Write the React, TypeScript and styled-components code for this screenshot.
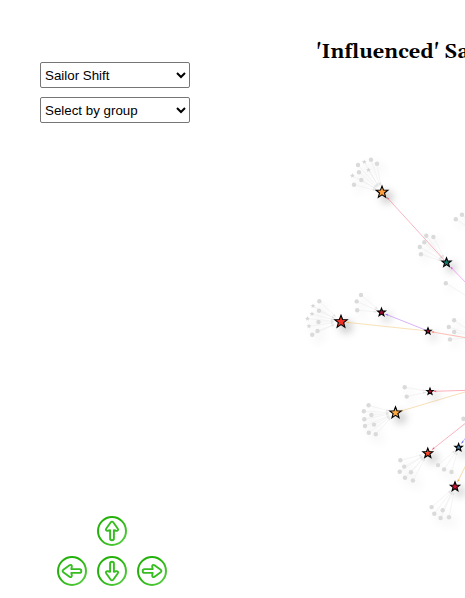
import React from "react";
import styled, { createGlobalStyle } from "styled-components";

const GlobalStyle = createGlobalStyle`
  * { box-sizing: border-box; }
  body { margin: 0; background: #fff; overflow: hidden; }
`;

const Page = styled.main`
  display: grid;
  grid-template-columns: 300px 1fr;
  width: 100%;
  height: 598px;
  overflow: hidden;
`;

const Sidebar = styled.aside`
  display: flex;
  flex-direction: column;
  justify-content: space-between;
  padding: 62px 0 12px 40px;
`;

const Filters = styled.div`
  display: flex;
  flex-direction: column;
  gap: 9px;
`;

const Select = styled.select`
  width: 150px;
  height: 26px;
  padding: 0;
  border: 1px solid #767676;
  border-radius: 2px;
  background: #fff;
  color: #000;
  font: 13.333px "Liberation Sans", Arial, sans-serif;
`;

const Pad = styled.nav`
  display: grid;
  grid-template-columns: repeat(3, 30px);
  gap: 10px;
  margin-left: 17px;
`;

const PadButton = styled.button<{ $column: number; $row: number }>`
  grid-column: ${(p) => p.$column};
  grid-row: ${(p) => p.$row};
  width: 30px;
  height: 30px;
  padding: 0;
  border: 0;
  background: none;
  svg { display: block; }
`;

const GraphPanel = styled.section`
  display: flex;
  flex-direction: column;
  min-width: 0;
  overflow: hidden;
`;

const Title = styled.h1`
  flex: none;
  height: 70px;
  margin: 0;
  padding: 39px 0 0 16px;
  overflow: hidden;
  white-space: nowrap;
  color: #000;
  font: bold 20px/26px Gelasio, Georgia, serif;
  letter-spacing: 0.07px;
`;

const Canvas = styled.svg`
  display: block;
  width: 100%;
  height: 528px;
`;

type Point = [number, number];
type Leaf = [number, number, 1?];

interface Cluster {
  at: Point;
  size: number;
  fill?: string;
  leaves: Leaf[];
}

const clusters: Cluster[] = [
  { at: [382, 192.2], size: 6.2, fill: "#ff9f40", leaves: [[358, 165], [364.3, 162, 1], [371, 159.7], [377, 163.8], [359, 172.2], [368.5, 170, 1], [352.4, 175.7, 1], [361.3, 180], [354, 184.7]] },
  { at: [446.5, 262.6], size: 4.9, fill: "#12786b", leaves: [[426.3, 235.7], [433.4, 237], [424.3, 242.2], [419.8, 247], [421, 254.2]] },
  { at: [341, 321.8], size: 6.6, fill: "#ef3125", leaves: [[319.3, 301.2], [313, 306, 1], [319, 310.8], [312, 314, 1], [307.5, 318.7, 1], [318.5, 322], [309, 326.2, 1], [317.5, 331], [312.2, 334.7]] },
  { at: [381.5, 312.3], size: 4.2, fill: "#a80932", leaves: [[361, 295], [356.7, 301.4], [357.2, 310.2]] },
  { at: [428, 331.2], size: 3.4, fill: "#b40a35", leaves: [] },
  { at: [430, 391.5], size: 3.4, fill: "#c60d36", leaves: [[404.7, 387.3], [406.7, 396.6]] },
  { at: [395.5, 412.8], size: 6, fill: "#ffa942", leaves: [[368.6, 405.3], [363.8, 411.3], [371.4, 415], [364.3, 419.2], [365, 426], [374, 424.6], [368.8, 432.7], [375.8, 434.2]] },
  { at: [427.8, 453.3], size: 5.2, fill: "#f44a29", leaves: [[400.4, 460.3], [404.2, 466.6], [399.7, 471.7], [411, 472.2], [405, 477.8], [412.9, 480.5]] },
  { at: [458.6, 447.5], size: 4, fill: "#4e87b2", leaves: [[438, 465.1], [444.1, 469.4], [451.5, 472]] },
  { at: [455, 486.7], size: 4.9, fill: "#cf1434", leaves: [[431.6, 507.1], [434.3, 513.8], [442.7, 510.3], [440.6, 518], [449, 517.2]] },
  { at: [480, 304], size: 4, leaves: [[445.8, 283.3]] },
  { at: [478, 337], size: 4, leaves: [[454.1, 320.3], [448.8, 327], [454.2, 332], [450, 339.4]] },
  { at: [486, 238], size: 4, leaves: [[455.8, 219.3], [462, 214.8]] },
  { at: [490, 410], size: 4, leaves: [[463.4, 418.7]] },
];

const links: { from: Point; to: Point; color: string }[] = [
  { from: [446, 262], to: [386.8, 197.2], color: "#f05f76" },
  { from: [468, 285], to: [450.5, 266.8], color: "#ed48ed" },
  { from: [428, 331], to: [346.3, 322.3], color: "#edbc60" },
  { from: [428, 331], to: [385.3, 314], color: "#a655f5" },
  { from: [475, 339.3], to: [431.2, 331.8], color: "#ff705b" },
  { from: [475, 390.1], to: [433.5, 391.3], color: "#f65269" },
  { from: [475, 389], to: [400.2, 411.3], color: "#edb75d" },
  { from: [475, 415.7], to: [432, 449.7], color: "#f35770" },
  { from: [470, 432], to: [461.4, 443.5], color: "#6764ee" },
  { from: [470.5, 456], to: [457.5, 482], color: "#edae43" },
];

const starPoints = (x: number, y: number, radius: number) =>
  Array.from({ length: 10 }, (_, i) => {
    const angle = -Math.PI / 2 + (i * Math.PI) / 5;
    const r = i % 2 ? radius * 0.42 : radius;
    return `${(x + Math.cos(angle) * r).toFixed(2)},${(y + Math.sin(angle) * r).toFixed(2)}`;
  }).join(" ");

function Link({ from, to, color }: { from: Point; to: Point; color: string }) {
  const angle = (Math.atan2(to[1] - from[1], to[0] - from[0]) * 180) / Math.PI;
  return (
    <g>
      <line x1={from[0]} y1={from[1]} x2={to[0]} y2={to[1]} stroke={color} strokeWidth="0.45" />
      <path d="M0 0L-3-1L-2.3 0L-3 1Z" fill={color} transform={`translate(${to[0]} ${to[1]}) rotate(${angle})`} />
    </g>
  );
}

function LeafEdge({ leaf, at, size }: { leaf: Leaf; at: Point; size: number }) {
  const dx = leaf[0] - at[0];
  const dy = leaf[1] - at[1];
  const length = Math.hypot(dx, dy);
  const tipX = at[0] + (dx / length) * (size + 0.5);
  const tipY = at[1] + (dy / length) * (size + 0.5);
  const angle = (Math.atan2(-dy, -dx) * 180) / Math.PI;
  return (
    <g>
      <line x1={leaf[0]} y1={leaf[1]} x2={tipX} y2={tipY} stroke="#ededed" strokeWidth="0.6" />
      <path d="M0 0L-3-1L-3 1Z" fill="#e3e3e3" transform={`translate(${tipX} ${tipY}) rotate(${angle})`} />
    </g>
  );
}

function Graph() {
  return (
    <Canvas viewBox="300 70 165 528">
      <defs>
        <filter id="blur" filterUnits="userSpaceOnUse" x="270" y="70" width="250" height="528">
          <feGaussianBlur stdDeviation="4.5" />
        </filter>
      </defs>
      <g filter="url(#blur)">
        {clusters.map((c) => (
          <g key={`shadow-${c.at}`}>
            {c.fill && <circle cx={c.at[0] + 5} cy={c.at[1] + 5} r={c.size * 0.9} fill="#000" opacity="0.25" />}
            {c.leaves.map((leaf) => (
              <circle key={`${leaf}`} cx={leaf[0] + 5} cy={leaf[1] + 5} r="2.2" fill="#000" opacity="0.1" />
            ))}
          </g>
        ))}
      </g>
      {clusters.map((c) => c.leaves.map((leaf) => <LeafEdge key={`${leaf}`} leaf={leaf} at={c.at} size={c.size} />))}
      {links.map((link) => <Link key={`${link.to}`} {...link} />)}
      {clusters.map((c) => (
        <g key={`${c.at}`}>
          {c.leaves.map((leaf) =>
            leaf[2] ? (
              <polygon key={`${leaf}`} points={starPoints(leaf[0], leaf[1], 2.6)} fill="#d6d6d6" />
            ) : (
              <circle key={`${leaf}`} cx={leaf[0]} cy={leaf[1]} r="2.2" fill="#dadada" />
            ),
          )}
          {c.fill && <polygon points={starPoints(c.at[0], c.at[1], c.size)} fill={c.fill} stroke="#000" strokeWidth="1.1" />}
        </g>
      ))}
    </Canvas>
  );
}

const directions = [
  { name: "Move up", column: 2, row: 1, angle: 0 },
  { name: "Move left", column: 1, row: 2, angle: -90 },
  { name: "Move down", column: 2, row: 2, angle: 180 },
  { name: "Move right", column: 3, row: 2, angle: 90 },
];

function ArrowIcon({ angle }: { angle: number }) {
  const gradient = `arrow-green-${angle}`;
  return (
    <svg width="30" height="30" viewBox="0 0 30 30" fill="none">
      <defs>
        <linearGradient id={gradient} gradientUnits="userSpaceOnUse" x1="3" y1="2" x2="27" y2="28">
          <stop offset="0.4" stopColor="#25b10b" />
          <stop offset="1" stopColor="#59ce46" />
        </linearGradient>
      </defs>
      <circle cx="15" cy="15" r="14" stroke={`url(#${gradient})`} strokeWidth="2" />
      <path
        d="M15 5.6Q14.3 5.6 13.8 6.3L9.3 12.5C8.3 13.9 9.2 15 10.8 14.8L13.1 14.3V22.6Q13.1 24.3 15 24.3T16.9 22.6V14.3L19.2 14.8C20.8 15 21.7 13.9 20.7 12.5L16.2 6.3Q15.7 5.6 15 5.6Z"
        transform={`rotate(${angle} 15 15)`}
        stroke="#36bd20"
        strokeWidth="1.9"
        strokeLinejoin="round"
      />
    </svg>
  );
}

export default function App() {
  return (
    <>
      <GlobalStyle />
      <Page>
        <Sidebar>
          <Filters>
            <Select aria-label="Node" defaultValue="Sailor Shift">
              <option>Sailor Shift</option>
            </Select>
            <Select aria-label="Group" defaultValue="Select by group">
              <option>Select by group</option>
            </Select>
          </Filters>
          <Pad aria-label="Graph navigation">
            {directions.map((d) => (
              <PadButton key={d.name} aria-label={d.name} $column={d.column} $row={d.row}>
                <ArrowIcon angle={d.angle} />
              </PadButton>
            ))}
          </Pad>
        </Sidebar>
        <GraphPanel>
          <Title>'Influenced' Sa</Title>
          <Graph />
        </GraphPanel>
      </Page>
    </>
  );
}
